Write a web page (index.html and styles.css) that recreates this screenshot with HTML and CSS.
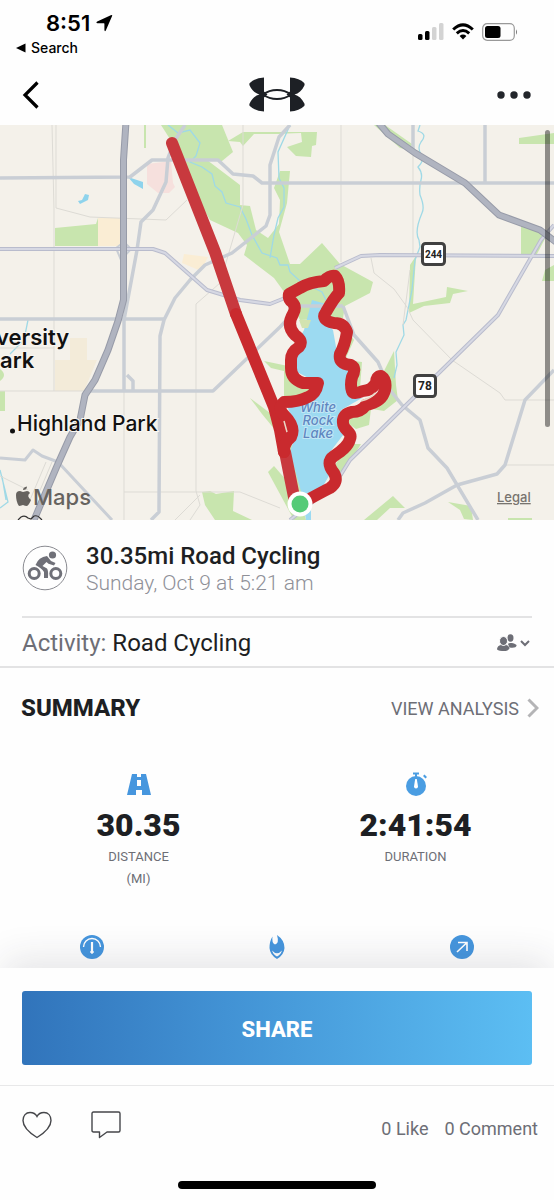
FILE: index.html
```html
<!DOCTYPE html>
<html lang="en">
<head>
    <meta charset="UTF-8">
    <meta name="viewport" content="width=device-width, initial-scale=1.0">
    <title>Road Cycling Workout</title>
    <link rel="stylesheet" href="styles.css">
</head>
<body>
    <div class="app">
        <div class="status-bar">
            <div class="status-left">
                <div class="clock">
                    <span>8:51</span>
                    <svg width="17" height="18" viewBox="0 0 17 18"><path d="M14.800 1.200 Q16.800 .2 16 2.300 L9.800 16.500 Q8.700 18 8.400 16 V9.700 Q8.400 9.200 7.900 9.200 H1.500 Q-.5 8.800 1.200 7.600 Z"/></svg>
                </div>
                <a class="back-app" href="#">
                    <svg width="10" height="10" viewBox="0 0 10 10"><path d="M0 5 L9.500 .5 V9.500 Z"/></svg>
                    <span>Search</span>
                </a>
            </div>
            <div class="status-right">
                <svg width="26" height="18" viewBox="0 0 26 18">
                    <rect x="0" y="11" width="4.500" height="6" rx="1.500"/>
                    <rect x="7" y="8" width="4.500" height="9" rx="1.500"/>
                    <rect x="14" y="4" width="4.500" height="13" rx="1.500" fill="#d3d3d3"/>
                    <rect x="21" y="0" width="4.500" height="17" rx="1.500" fill="#d3d3d3"/>
                </svg>
                <svg width="22" height="18" viewBox="0 0 22 18" fill="none" stroke="#000" stroke-width="3">
                    <path d="M1.200 6.500 Q11 -2.800 20.800 6.500"/>
                    <path d="M4.800 10.300 Q11 4.600 17.200 10.300"/>
                    <path d="M7.600 13 Q11 10.200 14.400 13 L11 16.600 Z" fill="#000" stroke="none"/>
                </svg>
                <svg width="36" height="18" viewBox="0 0 36 18">
                    <rect x=".7" y=".7" width="31.600" height="16.600" rx="4.500" fill="none" stroke="#999" stroke-width="1.200"/>
                    <rect x="3" y="3" width="15.500" height="12" rx="2.500"/>
                    <path d="M34 6.200 Q36 9 34 11.800 Z" fill="#777"/>
                </svg>
            </div>
        </div>

        <header class="nav-bar">
            <button class="icon-button" aria-label="Back">
                <svg width="18" height="28" viewBox="0 0 18 28" fill="none" stroke="#000" stroke-width="3.200"><path d="M15.500 1.500 L3 14 L15.500 26.500"/></svg>
            </button>
            <svg class="logo" width="56" height="35" viewBox="0 0 56 35" role="img" aria-label="Under Armour">
                <g fill="#1d2025">
                    <path d="M15 .5 Q5.500 1.200 .8 6 Q0 7 .6 8.500 C3 13.500 6.500 16.500 10.500 17.500 C6.500 18.500 3 21.500 .6 26.500 Q0 28 .8 29 Q5.500 33.800 15 34.500 V20.500 L18.500 17.500 L15 14.500 Z"/>
                    <path d="M41 .5 Q50.500 1.200 55.200 6 Q56 7 55.400 8.500 C53 13.500 49.500 16.500 45.500 17.500 C49.500 18.500 53 21.500 55.400 26.500 Q56 28 55.200 29 Q50.500 33.800 41 34.500 V20.500 L37.500 17.500 L41 14.500 Z"/>
                </g>
                <path d="M14 17.500 Q20 13 28 13 T42 17.500 Q36 22 28 22 T14 17.500 Z" fill="none" stroke="#1d2025" stroke-width="2"/>
            </svg>
            <button class="icon-button" aria-label="More">
                <svg width="36" height="10" viewBox="0 0 36 10" fill="#23262b"><circle cx="5" cy="5" r="3.700"/><circle cx="18" cy="5" r="3.700"/><circle cx="31" cy="5" r="3.700"/></svg>
            </button>
        </header>

        <svg class="map" viewBox="0 125 554 395" role="img" aria-label="Route map around White Rock Lake">
            <rect x="0" y="125" width="554" height="395" fill="#f4f1ea"/>

            <!-- parks -->
            <g fill="#c8e5ae">
                <path d="M161 125 H222 L233 152 L222 161 H184 Z"/>
                <path d="M184 160 H207 L240 185 L240 205 L250 206 L256 230 L268 238 L279 224 L280 200 L274 188 L280 171 L290 171 L287 203 L279 232 L290 264 L300 264 L322 243 L340 264 L373 282 L370 293 L345 306 L343 318 L300 320 L290 300 L274 278 L244 255 L247 245 L238 233 L210 220 L200 203 L190 180 Z"/>
                <path d="M55 228 L96 224 L98 218 V246 H55 Z"/>
                <path d="M144 125 H146 V148 H144 Z"/>
                <path d="M228 141 L243 132 H280 V134 L254 134 L243 146 L240 142 Z"/>
                <path d="M287 147 L302 142 L301 133 L274 134 V132 H317 L316 145 L312 146 L311 157 L296 156 Z"/>
                <path d="M374 125 H385 L412 144 L410 150 L400 148 Z"/>
                <path d="M519 138 L554 133 V144 H519 Z"/>
                <path d="M521 226 L548 233 L537 254 H521 Z"/>
                <path d="M545 270 L554 265 V281 H542 Z"/>
                <path d="M410 265 L416 256 L413 304 L446 297 L447 287 L468 291 L453 294 L450 303 L424 306 L409 313 Z"/>
                <path d="M0 391 H5 V411 H0 Z"/>
                <path d="M0 369 Q8 375 0 381 Z"/>
                <path d="M202 492 L210 491 L216 494 L228 492 L234 491 L233 511 L252 520 H215 L205 505 Z"/>
                <path d="M364 520 L393 496 L405 508 L390 508 L377 520 Z"/>
                <path d="M448 502 L471 506 L473 520 L464 519 L460 510 Z"/>
                <path d="M508 518 H532 V520 H508 Z"/>
                <path d="M250 398 L274 416 L280 436 L262 414 Z"/>
                <path d="M264 361 L288 366 V372 L271 368 Z"/>
                <path d="M284 366 L300 385 L316 388 L300 400 H284 Z"/>
                <path d="M268 472 L274 466 L300 496 L306 520 H294 Z"/>
                <path d="M282 440 L290 440 L308 498 L298 500 Z"/>
                <path d="M342 322 L354 340 L345 360 L362 362 L360 388 H350 L340 365 Z"/>
                <path d="M394 351 L396 385 L398 400 L384 411 L372 409 L390 395 L388 380 L383 373 Z"/>
                <path d="M346 416 L371 409 L369 425 L356 429 L346 422 Z"/>
                <path d="M348 444 L361 444 L348 465 L340 480 L332 470 Z"/>
            </g>
            <!-- built-up blocks -->
            <g fill="#faedd4">
                <path d="M98 218 H120 V246 H98 Z"/>
                <path d="M184 254 L208 257 L201 271 L182 263 Z"/>
                <path d="M55 360 H70 V338 H87 V360 H97 L84 391 H55 Z" fill="#f3ebd9"/>
            </g>
            <path d="M147 164 L171 161 L173 183 L175 187 L169 193 L158 193 L147 184 Z" fill="#f6e0dd"/>

            <!-- water -->
            <g fill="#8ed3ec">
                <path d="M78 201 L82 200 L85 194 L89 195 L88 200 L80 204 Z"/>
                <path d="M128 177 L143 182 V189 L134 184 Z"/>
            </g>
            <path d="M312 300 L326 304 L324 320 L333 330 L338 358 L350 370 L350 394 L362 398 L341 410 L347 430 L330 452 L330 474 L311 507 L311 520 L306 520 L302 495 L290 452 L297 430 L287 406 L320 384 L297 372 L293 350 L304 330 Z" fill="#9cdaf1"/>
            <path d="M299 320 H311 L308 328 H302 Z" fill="#d3e3b0"/>
            <g fill="none" stroke="#9fd9e6" stroke-width="1.300">
                <path d="M168 125 L178 133 L190 130 L200 143 L196 156 L190 162 L202 167 L212 174 L215 186 L222 192 L226 203 L240 207 L246 219 L252 235 L262 253 L277 258 L280 265 L288 265 L290 272 L300 281 L322 292 L328 304"/>
                <path d="M290 125 L278 152 L279 178 L284 188 L284 207 L278 218 L274 235 L270 258"/>
                <path d="M420 125 L418 131 Q428 134 421 142 Q417 148 421 154 T418 167 Q423 173 421 180 T420 195 Q425 207 422 213 Q414 232 419 240 L420 247 L415 260 L412 290 L406 320 L403 325 L404 335 L396 352 L397 365 L394 378"/>
                <path d="M28 320 L24 340 L10 354 M0 470 L8 502 L0 508 M2 476 L6 500"/>
            </g>

            <!-- minor streets -->
            <g fill="none" stroke="#dddbd5" stroke-width="1">
                <path d="M52 125 L54 210 V391 M56 125 V208 L90 217 L166 220 L187 200"/>
                <path d="M243 125 V205 L220 283 L196 304 V491"/>
                <path d="M341 125 V262 M413 155 V256 M371 258 L374 273 L394 289 L407 307 L413 320 L452 360 L500 393 L505 400 H554"/>
                <path d="M410 270 L403 325 M505 465 H554 M0 391 H90 M0 348 H54 M124 391 V520 M124 492 H240 L280 508"/>
                <path d="M196 491 L200 505 L190 520 M200 495 L175 520 M46 462 L30 500 M52 462 L38 495 M0 476 L28 490"/>
            </g>

            <!-- main roads -->
            <g fill="none" stroke="#c9ced5" stroke-width="3.500" stroke-linejoin="round">
                <path d="M0 178 L130 177 L152 160 H218 L233 174 L253 176 L262 183 H554"/>
                <path d="M0 319 H165"/>
                <path d="M290 125 L279 137 L270 165 V215 L266 226 L232 253 L205 265 L190 280 L175 298 L164 320 L160 336 L159 512 L151 520"/>
                <path d="M185 125 L175 140 L168 158 L166 182 L153 210 L141 222 L137 250 L124 320 V390 M127 375 L133 381 V391"/>
                <path d="M90 391 H213 L280 327 L300 306 H343 M413 125 V154 M485 125 V183"/>
                <path d="M343 306 L354 335 L378 362 L390 390 L402 405 L420 420 L428 448 L447 468 L478 520"/>
                <path d="M554 370 L525 400 L505 465 L497 474 L457 485 L425 503 L403 513 L398 520"/>
                <path d="M0 458 L25 460 L33 450 L42 456 L58 462 L112 520" stroke-width="3"/>
                <path d="M116 248 L124 242 L131 249 L121 260 Z" stroke-width="2"/>
            </g>
            <g fill="none" stroke-linejoin="round">
                <g stroke="#b9bccd" stroke-width="4">
                    <path d="M0 249 H153 L165 253 L207 290 L240 300 L270 304 L290 296 M335 268 L361 256 L380 255 L554 256"/>
                    <path d="M554 225 L541 240 L498 315 L350 460 L335 484 L290 520"/>
                </g>
                <g stroke="#d6d8e3" stroke-width="2">
                    <path d="M0 249 H153 L165 253 L207 290 L240 300 L270 304 L290 296 M335 268 L361 256 L380 255 L554 256"/>
                    <path d="M554 225 L541 240 L498 315 L350 460 L335 484 L290 520"/>
                </g>
            </g>

            <!-- highways -->
            <g fill="none" stroke-linejoin="round">
                <g stroke="#979ba8" stroke-width="7">
                    <path d="M126 122 L123.500 160 V300 L118 321 L108 350 L95 380 L85 395 L80 420 L70 437 L57 466 L34 520"/>
                    <path d="M378 122 L388 134 L415 153 L465 183 L499 215 L540 230 L556 242"/>
                </g>
                <g stroke="#b0b4c0" stroke-width="5">
                    <path d="M126 122 L123.500 160 V300 L118 321 L108 350 L95 380 L85 395 L80 420 L70 437 L57 466 L34 520"/>
                    <path d="M378 122 L388 134 L415 153 L465 183 L499 215 L540 230 L556 242"/>
                </g>
            </g>

            <!-- place labels -->
            <text class="lake-label" x="318" y="412">White</text>
            <text class="lake-label" x="318" y="425">Rock</text>
            <text class="lake-label" x="318" y="438">Lake</text>
            <text class="place-label place-large" x="-4" y="345">versity</text>
            <text class="place-label place-large" x="0" y="368">ark</text>
            <circle cx="12.500" cy="431" r="2.500" fill="#111"/>
            <text class="place-label" x="17" y="431">Highland Park</text>

            <!-- workout route -->
            <g fill="none" stroke="#c92a2e" stroke-width="12" stroke-linecap="round" stroke-linejoin="round">
                <path d="M172 143 L215 252 L236 314 M285 452 L295 502" stroke="#c8393e"/>
                <path d="M236 314 L274 407 L280 430 L284 452"/>
                <path d="M302 503 Q322 492 330 488 Q339 482 334 473 Q325 462 334 456 C340 452 348 447 350 439 C353 432 343 430 343 423 Q342 414 352 412 Q361 412 366 405 Q382 402 385 390 Q387 380 381 376 Q376 376 376 383 Q371 391 363 391 Q353 395 352 391 Q350 385 352 377 Q357 368 351 365 Q338 364 340 354 Q345 345 347 332 Q344 323 334 323 Q320 320 326 312 Q334 298 339 293 Q340 281 335 276 Q330 275 324 281 Q310 282 300 288 L289 294 Q288 299 292 302 Q297 307 293 314 Q286 326 295 335 Q304 341 299 347 Q291 352 291 360 V368 Q291 379 303 383 H318 Q316 394 308 397 Q299 402 284 402 Q277 408 284 415 Q296 427 291 437 Q283 444 284 452"/>
            </g>
            <path d="M284 421 L287 432 M361 401 Q372 398 375 393" stroke="#ead7c6" fill="none" stroke-width="1.500"/>
            <circle cx="300" cy="504" r="12.500" fill="#fff"/>
            <circle cx="300" cy="504" r="8.500" fill="#55cb78"/>

            <!-- road shields -->
            <rect x="422.500" y="243.500" width="22" height="21" rx="3" fill="#fff" stroke="#414141" stroke-width="3"/>
            <text class="shield-label shield-small" x="433.500" y="258">244</text>
            <rect x="414.500" y="375.500" width="21" height="21" rx="3" fill="#fff" stroke="#414141" stroke-width="3"/>
            <text class="shield-label" x="425" y="390">78</text>

            <!-- attribution -->
            <path d="M16 495 Q16 491 20 491 L23 492 L27 491 Q29 491 30 493 Q26 496 31 500 Q29 505 27 506 Q25 506 23 505 Q20 506 19 506 Q16 502 16 495 Z M23 490 Q23 487 27 486.500 Q27 490 23 490 Z" fill="#66635f"/>
            <text class="maps-label" x="33" y="505">Maps</text>
            <text class="legal-label" x="497" y="502">Legal</text>
            <path d="M18 520 L21 517 Q25 515 28 518 L31 519 L34 516 Q38 515 40 518 L42 520" fill="none" stroke="#333" stroke-width="1.200"/>

            <rect x="545" y="130" width="5" height="297" rx="2.500" fill="#000" fill-opacity=".42"/>
        </svg>

        <main class="content">
            <section class="workout">
                <svg width="46" height="46" viewBox="0 0 46 46" fill="none" stroke="#6f7078">
                    <circle cx="23" cy="23" r="21.800" stroke="#8a8b91"/>
                    <g stroke-width="3">
                        <circle cx="12.200" cy="28.500" r="5"/>
                        <circle cx="33.800" cy="28.500" r="5"/>
                    </g>
                    <circle cx="30.500" cy="10" r="3.600" fill="#6f7078" stroke="none"/>
                    <path d="M13.500 20 Q16.500 12 25 11 L29 16 L33.500 18 L32 20.500 L26.500 18.800 L24.500 17 L20.500 21 L25 23.500 Q26.500 25 26 33 H22 V27 Q20 23.500 13.500 20 Z" fill="#6f7078" stroke="none"/>
                </svg>
                <div>
                    <h1>30.35mi Road Cycling</h1>
                    <p class="workout-date">Sunday, Oct 9 at 5:21 am</p>
                </div>
            </section>

            <section class="activity">
                <p><span class="activity-label">Activity:</span> Road Cycling</p>
                <button class="icon-button" aria-label="Who can see this workout">
                    <svg width="36" height="20" viewBox="0 0 36 20" fill="#6d6e76">
                        <ellipse cx="14.500" cy="5" rx="3" ry="3.700"/>
                        <path d="M12 11 Q13 9.500 16 10 Q20.500 11 20.500 12.500 Q20 15.500 13.500 14.500 Z"/>
                        <ellipse cx="7.500" cy="8" rx="4" ry="4.500" stroke="#fefefe"/>
                        <path d="M1 16 Q1.500 12.500 5 12 Q7.500 14 10 12 Q13.500 13 13.500 15.500 Q12 18.500 6 18 Q1 17.500 1 16 Z"/>
                        <path d="M25 8 L29 12 L33 8" fill="none" stroke="#6d6e76" stroke-width="2"/>
                    </svg>
                </button>
            </section>

            <section class="summary">
                <div class="summary-header">
                    <h2>SUMMARY</h2>
                    <a class="analysis-link" href="#">
                        <span>VIEW ANALYSIS</span>
                        <svg width="12" height="20" viewBox="0 0 12 20" fill="none" stroke="#b4b4b6" stroke-width="3"><path d="M1.500 1.500 L10 10 L1.500 18.500"/></svg>
                    </a>
                </div>
                <div class="stats">
                    <div class="stat">
                        <svg width="24" height="24" viewBox="0 0 24 24" fill="#4696de"><path d="M5 2 H10 V5 H14 V2 H19 L24 23 H15 V18 H9 V23 H0 Z M10 8 V14 H14 V8 Z" fill-rule="evenodd"/></svg>
                        <strong>30.35</strong>
                        <span class="stat-label">DISTANCE<br>(MI)</span>
                    </div>
                    <div class="stat">
                        <svg width="24" height="24" viewBox="0 0 24 24" fill="#4a9de2">
                            <circle cx="12" cy="14" r="10"/>
                            <path d="M9 .5 H15 V2.500 H13 V5 H11 V2.500 H9 Z M19 4 L20.500 2.500 L23 5 L21.500 6.500 Z"/>
                            <path d="M11.200 7 H12.800 L14 14.500 A2 2 0 1 1 10 14.500 Z" fill="#fff"/>
                        </svg>
                        <strong>2:41:54</strong>
                        <span class="stat-label">DURATION</span>
                    </div>
                </div>
                <div class="more-stats">
                    <svg width="24" height="24" viewBox="0 0 24 24" fill="none" stroke="#fff">
                        <circle cx="12" cy="12" r="12" fill="#4696de" stroke="none"/>
                        <path d="M3.500 12 A8.500 8.500 0 0 1 20.500 12" stroke-width="1.400"/>
                        <path d="M12 7 V16" stroke-width="2.200"/>
                        <circle cx="12" cy="17" r="1.300" fill="#fff"/>
                    </svg>
                    <svg width="24" height="24" viewBox="0 0 24 24" fill="#4696de">
                        <path d="M12 0 Q19.500 5 19.500 13 Q19 20 12 24 Q5 20 4.500 13 Q4.500 6 7.500 1.500 Q6.500 8 10 9.500 Q14.500 8.500 12 0 Z"/>
                        <path d="M7 15.500 Q12 21 17 15.500 Q15.500 20 12 21.500 Q8.500 20 7 15.500 Z" fill="#fff"/>
                    </svg>
                    <svg width="24" height="24" viewBox="0 0 24 24" fill="none" stroke="#fff" stroke-width="1.600">
                        <circle cx="12" cy="12" r="12" fill="#4696de" stroke="none"/>
                        <path d="M7 17 L17 7.500 M8 7.500 H17 V16"/>
                    </svg>
                </div>
            </section>
        </main>

        <footer class="footer">
            <div class="share">
                <button class="share-button">SHARE</button>
            </div>
            <div class="social">
                <div class="social-actions">
                    <button class="icon-button" aria-label="Like">
                        <svg width="30" height="28" viewBox="0 0 30 28" fill="none" stroke="#45464a" stroke-width="1.400"><path d="M15 26.500 C7 21.500 1 16 1 9.500 C1 4.500 4 1.500 8 1.500 C11 1.500 13.500 2.500 15 5.500 C16.500 2.500 19 1.500 22 1.500 C26 1.500 29 4.500 29 9.500 C29 16 23 21.500 15 26.500 Z"/></svg>
                    </button>
                    <button class="icon-button" aria-label="Comment">
                        <svg width="30" height="28" viewBox="0 0 30 28" fill="none" stroke="#45464a" stroke-width="1.400" stroke-linejoin="round"><path d="M2.500 1 H27.500 Q29 1 29 2.500 V19.500 Q29 21 27.500 21 H16 L8.500 26.500 V21 H2.500 Q1 21 1 19.500 V2.500 Q1 1 2.500 1 Z"/></svg>
                    </button>
                </div>
                <div class="social-counts">
                    <a href="#">0 Like</a>
                    <a href="#">0 Comment</a>
                </div>
            </div>
            <div class="home-indicator"></div>
        </footer>
    </div>
</body>
</html>
```
FILE: styles.css
```css
* {
    box-sizing: border-box;
}
body {
    margin: 0;
    font-family: Roboto, sans-serif;
    background-color: #fefefe;
    color: #1d1f23;
}
h1, h2, p {
    margin: 0;
    font-weight: normal;
}
a {
    color: inherit;
    text-decoration: none;
}
svg {
    display: block;
    flex-shrink: 0;
}
.app {
    display: flex;
    flex-direction: column;
    min-height: 100vh;
}
.icon-button {
    padding: 0;
    border: none;
    background: none;
    cursor: pointer;
}

/* Status bar */
.status-bar {
    display: flex;
    justify-content: space-between;
    padding: 10px 36px 0 16px;
    height: 62px;
    font-family: Inter, sans-serif;
    color: #000;
}
.clock {
    display: flex;
    align-items: center;
    gap: 6px;
    padding-left: 30px;
    font-size: 22px;
    line-height: 26px;
    font-weight: 600;
}
.back-app {
    display: flex;
    align-items: center;
    gap: 5px;
    font-size: 14px;
    line-height: 24px;
    font-weight: 500;
}
.status-right {
    display: flex;
    gap: 8px;
    padding-top: 13px;
}

/* Navigation */
.nav-bar {
    display: grid;
    grid-template-columns: 1fr auto 1fr;
    align-items: center;
    height: 63px;
    padding: 2px 22px 0;
}
.nav-bar .icon-button:first-child {
    justify-self: start;
}
.nav-bar .icon-button:last-child {
    justify-self: end;
}
.map {
    width: 100%;
    font-family: Inter, sans-serif;
}
.place-label {
    font-size: 21px;
    font-weight: 500;
    fill: #111;
    stroke: #f8f6f1;
    stroke-width: 2px;
    paint-order: stroke;
}
.place-large {
    font-size: 22px;
    font-weight: 600;
}
.lake-label {
    font-size: 13px;
    font-weight: 500;
    font-style: italic;
    text-anchor: middle;
    fill: #5f86c0;
    stroke: #c2e6f5;
    stroke-width: 2px;
    paint-order: stroke;
}
.shield-label {
    font-family: Roboto, sans-serif;
    font-size: 12px;
    font-weight: 700;
    text-anchor: middle;
    fill: #222;
}
.shield-small {
    font-size: 10px;
}
.maps-label {
    font-size: 22px;
    font-weight: 500;
    fill: #66635f;
}
.legal-label {
    font-size: 13px;
    font-weight: 500;
    fill: #77746f;
    text-decoration: underline;
}

/* Workout */
.content {
    flex: 1;
}
.workout {
    display: flex;
    align-items: center;
    gap: 18px;
    margin: 0 22px;
    height: 98px;
    border-bottom: 2px solid #e3e3e4;
}
.workout h1 {
    padding-top: 2px;
    font-size: 24px;
    line-height: 28px;
    font-weight: 500;
}
.workout-date {
    font-size: 21px;
    line-height: 26px;
    font-weight: 300;
    color: #8f9098;
}
.activity {
    display: flex;
    align-items: center;
    justify-content: space-between;
    height: 50px;
    padding: 2px 22px 0;
    border-bottom: 2px solid #e3e3e4;
    font-size: 24px;
}
.activity-label {
    color: #6d6e76;
}

/* Summary */
.summary-header {
    display: flex;
    align-items: center;
    justify-content: space-between;
    height: 80px;
    padding: 0 15px 0 21px;
}
.summary-header h2 {
    font-size: 24px;
    font-weight: 800;
}
.analysis-link {
    display: flex;
    align-items: center;
    gap: 8px;
    font-size: 18px;
    color: #6d6e76;
}
.stats {
    display: grid;
    grid-template-columns: 1fr 1fr;
    padding-top: 24px;
}
.stat {
    display: flex;
    flex-direction: column;
    align-items: center;
}
.stat strong {
    padding-top: 8px;
    font-size: 32px;
    line-height: 42px;
    font-weight: 900;
}
.stat-label {
    font-size: 13px;
    line-height: 22px;
    color: #6d6e76;
    text-align: center;
}
.more-stats {
    display: grid;
    grid-template-columns: 1fr 1fr 1fr;
    justify-items: center;
    padding: 45px 0 9px;
}

/* Footer */
.footer {
    background-color: #fefefe;
    box-shadow: 0 -12px 36px -4px rgba(40, 40, 60, 0.12);
}
.share {
    padding: 23px 22px 20px;
    border-bottom: 1px solid #e8e8e9;
}
.share-button {
    width: 100%;
    height: 74px;
    padding-top: 4px;
    border: none;
    border-radius: 3px;
    background: linear-gradient(to right, #3174bb, #4292d4 40%, #5cbef3);
    color: #fff;
    font-family: inherit;
    font-size: 22px;
    font-weight: 800;
    cursor: pointer;
}
.social {
    display: flex;
    justify-content: space-between;
    padding: 23px 16px 0 22px;
}
.social-actions {
    display: flex;
    gap: 39px;
}
.social-counts {
    display: flex;
    gap: 16px;
    padding-top: 9px;
    font-size: 18px;
    line-height: 22px;
    color: #6d6e76;
}
.home-indicator {
    width: 198px;
    height: 8px;
    margin: 41px auto 12px;
    border-radius: 4px;
    background-color: #000;
}
```
